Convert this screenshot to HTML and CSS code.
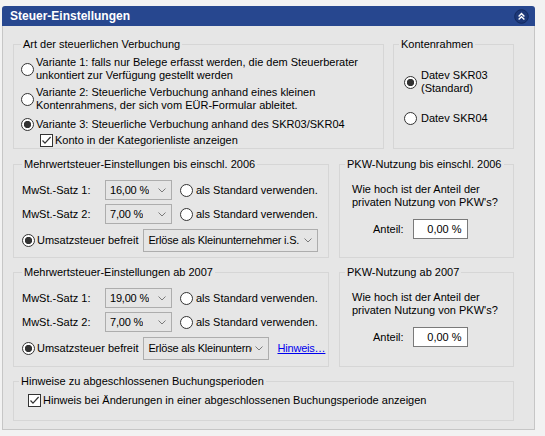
FILE: index.html
```html
<!DOCTYPE html>
<html lang="de">
<head>
    <meta charset="UTF-8">
    <meta name="viewport" content="width=device-width, initial-scale=1.0">
    <title>Steuer-Einstellungen</title>
    <link rel="stylesheet" href="styles.css">
</head>
<body>
    <div class="panel">
        <div class="panel-header">
            <span class="panel-title">Steuer-Einstellungen</span>
            <span class="collapse-btn">
                <svg width="15" height="15" viewBox="0 0 15 15">
                    <circle cx="7.5" cy="7.5" r="6.8" fill="#1d3878" stroke="#132a5e" stroke-width="1"/>
                    <polyline points="4.6,7.4 7.5,4.5 10.4,7.4" fill="none" stroke="#fff" stroke-width="1.4"/>
                    <polyline points="4.6,10.6 7.5,7.7 10.4,10.6" fill="none" stroke="#fff" stroke-width="1.4"/>
                </svg>
            </span>
        </div>

        <div class="panel-body">
            <!-- Buchungsart + Kontenrahmen -->
            <div class="row row-top">
                <fieldset class="group group-booking">
                    <legend>Art der steuerlichen Verbuchung</legend>
                    <div class="option v1">
                        <span class="radio"></span>
                        <span>Variante 1: falls nur Belege erfasst werden, die dem Steuerberater<br>unkontiert zur Verfügung gestellt werden</span>
                    </div>
                    <div class="option v2">
                        <span class="radio"></span>
                        <span>Variante 2: Steuerliche Verbuchung anhand eines kleinen<br>Kontenrahmens, der sich vom EÜR-Formular ableitet.</span>
                    </div>
                    <div class="option v3">
                        <span class="radio checked"></span>
                        <span>Variante 3: Steuerliche Verbuchung anhand des SKR03/SKR04</span>
                    </div>
                    <div class="option check-row">
                        <span class="checkbox"><svg width="11" height="11" viewBox="0 0 11 11"><polyline points="1.5,5.5 4,8.2 9.6,2" fill="none" stroke="#333" stroke-width="1.2"/></svg></span>
                        <span>Konto in der Kategorienliste anzeigen</span>
                    </div>
                </fieldset>

                <fieldset class="group group-chart">
                    <legend>Kontenrahmen</legend>
                    <div class="option skr03">
                        <span class="radio checked"></span>
                        <span>Datev SKR03<br>(Standard)</span>
                    </div>
                    <div class="option skr04">
                        <span class="radio"></span>
                        <span>Datev SKR04</span>
                    </div>
                </fieldset>
            </div>

            <!-- bis einschl. 2006 -->
            <div class="row row-mid">
                <fieldset class="group group-vat">
                    <legend>Mehrwertsteuer-Einstellungen bis einschl. 2006</legend>
                    <div class="vat-row first">
                        <span class="vat-label">MwSt.-Satz 1:</span>
                        <div class="combo combo-rate"><span class="combo-text">16,00 %</span><svg class="chevron" width="8" height="5" viewBox="0 0 8 5"><polyline points="0.5,0.5 4,4 7.5,0.5" fill="none" stroke="#7a7a7a"/></svg></div>
                        <span class="radio"></span>
                        <span>als Standard verwenden.</span>
                    </div>
                    <div class="vat-row">
                        <span class="vat-label">MwSt.-Satz 2:</span>
                        <div class="combo combo-rate"><span class="combo-text">7,00 %</span><svg class="chevron" width="8" height="5" viewBox="0 0 8 5"><polyline points="0.5,0.5 4,4 7.5,0.5" fill="none" stroke="#7a7a7a"/></svg></div>
                        <span class="radio"></span>
                        <span>als Standard verwenden.</span>
                    </div>
                    <div class="vat-row exempt">
                        <span class="radio checked"></span>
                        <span>Umsatzsteuer befreit</span>
                        <div class="combo combo-wide"><span class="combo-text">Erlöse als Kleinunternehmer i.S.</span><svg class="chevron" width="8" height="5" viewBox="0 0 8 5"><polyline points="0.5,0.5 4,4 7.5,0.5" fill="none" stroke="#7a7a7a"/></svg></div>
                    </div>
                </fieldset>

                <fieldset class="group group-car">
                    <legend>PKW-Nutzung bis einschl. 2006</legend>
                    <p class="question">Wie hoch ist der Anteil der<br>privaten Nutzung von PKW's?</p>
                    <div class="share-row">
                        <span>Anteil:</span>
                        <div class="share-input">0,00 %</div>
                    </div>
                </fieldset>
            </div>

            <!-- ab 2007 -->
            <div class="row row-mid row-2007">
                <fieldset class="group group-vat">
                    <legend>Mehrwertsteuer-Einstellungen ab 2007</legend>
                    <div class="vat-row first">
                        <span class="vat-label">MwSt.-Satz 1:</span>
                        <div class="combo combo-rate"><span class="combo-text">19,00 %</span><svg class="chevron" width="8" height="5" viewBox="0 0 8 5"><polyline points="0.5,0.5 4,4 7.5,0.5" fill="none" stroke="#7a7a7a"/></svg></div>
                        <span class="radio"></span>
                        <span>als Standard verwenden.</span>
                    </div>
                    <div class="vat-row">
                        <span class="vat-label">MwSt.-Satz 2:</span>
                        <div class="combo combo-rate"><span class="combo-text">7,00 %</span><svg class="chevron" width="8" height="5" viewBox="0 0 8 5"><polyline points="0.5,0.5 4,4 7.5,0.5" fill="none" stroke="#7a7a7a"/></svg></div>
                        <span class="radio"></span>
                        <span>als Standard verwenden.</span>
                    </div>
                    <div class="vat-row exempt">
                        <span class="radio checked"></span>
                        <span>Umsatzsteuer befreit</span>
                        <div class="combo combo-short"><span class="combo-text">Erlöse als Kleinunternehmer i.S.</span><svg class="chevron" width="8" height="5" viewBox="0 0 8 5"><polyline points="0.5,0.5 4,4 7.5,0.5" fill="none" stroke="#7a7a7a"/></svg></div>
                        <a class="hint-link" href="#">Hinweis…</a>
                    </div>
                </fieldset>

                <fieldset class="group group-car">
                    <legend>PKW-Nutzung ab 2007</legend>
                    <p class="question">Wie hoch ist der Anteil der<br>privaten Nutzung von PKW's?</p>
                    <div class="share-row">
                        <span>Anteil:</span>
                        <div class="share-input">0,00 %</div>
                    </div>
                </fieldset>
            </div>

            <!-- abgeschlossene Perioden -->
            <fieldset class="group group-periods">
                <legend>Hinweise zu abgeschlossenen Buchungsperioden</legend>
                <div class="option check-row">
                    <span class="checkbox"><svg width="11" height="11" viewBox="0 0 11 11"><polyline points="1.5,5.5 4,8.2 9.6,2" fill="none" stroke="#333" stroke-width="1.2"/></svg></span>
                    <span>Hinweis bei Änderungen in einer abgeschlossenen Buchungsperiode anzeigen</span>
                </div>
            </fieldset>
        </div>
    </div>
</body>
</html>
```

FILE: styles.css
```css
* {
    margin: 0;
    padding: 0;
    box-sizing: border-box;
}

body {
    background: #f2f2f2;
    font-family: 'Liberation Sans', Arial, sans-serif;
    font-size: 11px;
    line-height: 13px;
    color: #000;
    padding: 6px 0 0 2px;
}

.panel {
    width: 533px;
}

.panel-header {
    height: 20px;
    background: #27478f;
    border-radius: 3px 3px 0 0;
    display: flex;
    align-items: center;
    justify-content: space-between;
    padding: 0 6px 0 8px;
}

.panel-title {
    color: #fff;
    font-size: 12px;
    font-weight: bold;
}

.collapse-btn {
    display: flex;
}

.panel-body {
    height: 404px;
    background: #e6e6e6;
    border: 1px solid #c6c6c6;
    border-top: none;
    padding: 12px 20px 0 10px;
}

/* group boxes */
.row {
    display: flex;
    gap: 9px;
}

.group {
    border: 1px solid #d6d6d6;
    min-width: 0;
    padding: 0 7px;
    display: flex;
    flex-direction: column;
}

.group legend {
    padding: 0 2px;
    line-height: 13px;
}

.option {
    display: flex;
    align-items: center;
    white-space: nowrap;
}

.radio {
    width: 13px;
    height: 13px;
    flex: none;
    border: 1px solid #333;
    border-radius: 50%;
    background: #fff;
    margin-right: 2px;
}

.radio.checked {
    background: radial-gradient(circle, #333 3.4px, #fff 3.9px);
}

.checkbox {
    width: 13px;
    height: 13px;
    flex: none;
    border: 1px solid #333;
    background: #fff;
    display: flex;
    align-items: center;
    justify-content: center;
    margin-right: 2px;
}

/* Art der Verbuchung */
.row-top {
    height: 111px;
}

.group-booking {
    width: 371px;
}

.group-booking .v1 {
    margin-top: 5px;
}

.group-booking .v2 {
    margin-top: 4px;
}

.group-booking .v3 {
    margin-top: 6px;
}

.group-booking .check-row {
    margin: 3px 0 0 19px;
}

.group-chart {
    width: 121px;
    padding: 0 5px;
}

.group-chart .option {
    margin-left: 5px;
}

.group-chart .radio {
    margin-right: 4px;
}

.group-chart .skr03 {
    margin-top: 18px;
}

.group-chart .skr04 {
    margin-top: 17px;
}

/* MwSt + PKW */
.row-mid {
    height: 100px;
    margin-top: 9px;
    gap: 10px;
}

.row-2007 {
    height: 101px;
    margin-top: 8px;
}

.group-vat {
    width: 316px;
    padding: 0 8px;
}

.vat-row {
    display: flex;
    align-items: center;
    white-space: nowrap;
    margin-top: 4px;
}

.vat-row.first {
    margin-top: 9px;
}

.vat-row.exempt {
    margin-top: 5px;
}

.vat-label {
    width: 83px;
}

.combo {
    flex: none;
    height: 20px;
    background: #e5e5e5;
    border: 1px solid #adadad;
    display: flex;
    align-items: center;
    justify-content: space-between;
    padding: 0 5px 0 4px;
    overflow: hidden;
}

.combo-text {
    overflow: hidden;
    white-space: nowrap;
    letter-spacing: -0.2px;
}

.chevron {
    flex: none;
    margin-left: 3px;
}

.combo-rate {
    width: 67px;
    margin-right: 8px;
}

.vat-row .radio {
    margin-right: 3px;
}

.exempt .radio {
    margin-right: 2px;
}

.combo-wide,
.combo-short {
    height: 23px;
    margin-left: 5px;
}

.combo-wide {
    width: 175px;
}

.combo-short {
    width: 126px;
}

.hint-link {
    color: #0000ee;
    margin-left: 8px;
    letter-spacing: -0.2px;
}

.group-car {
    flex: 1;
    padding: 0 5px;
}

.question {
    margin: 12px 0 0 7px;
}

.share-row {
    display: flex;
    align-items: center;
    gap: 9px;
    margin: 10px 0 0 28px;
}

.share-input {
    width: 55px;
    height: 20px;
    background: #fff;
    border: 1px solid #7a7a7a;
    text-align: right;
    line-height: 18px;
    padding-right: 5px;
}

/* Buchungsperioden */
.group-periods {
    height: 46px;
    margin-top: 8px;
    padding: 0 5px;
}

.group-periods .check-row {
    margin: 6px 0 0 9px;
}
```
